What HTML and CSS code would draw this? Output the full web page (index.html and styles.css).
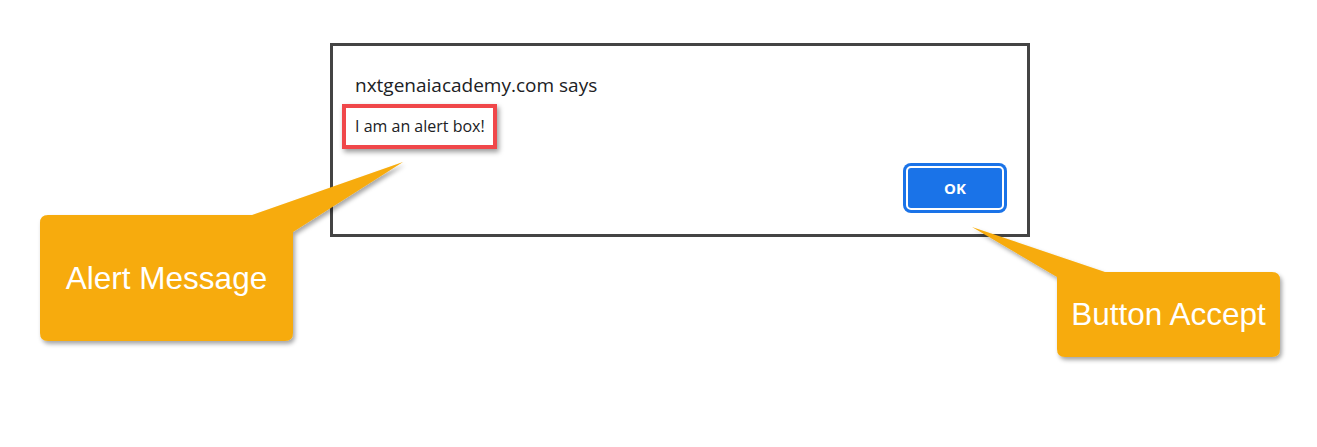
FILE: index.html
```html
<!DOCTYPE html>
<html>
<head>
<meta charset="utf-8">
<link rel="stylesheet" href="styles.css">
</head>
<body>
<div class="stage">
  <div class="dialog">
    <div class="title">nxtgenaiacademy.com says</div>
    <div class="message">I am an alert box!</div>
    <div class="actions"><button class="ok">OK</button></div>
  </div>

  <svg class="shapes" width="1317" height="447" viewBox="0 0 1317 447">
    <defs>
      <filter id="sh" x="-10%" y="-10%" width="130%" height="140%">
        <feDropShadow dx="2" dy="3" stdDeviation="2.2" flood-color="#000" flood-opacity="0.35"/>
      </filter>
    </defs>
    <path filter="url(#sh)" fill="#f7ab0a" d="M48,215 L252,215 L403,162 L293,232 L293,333 Q293,341 285,341 L48,341 Q40,341 40,333 L40,223 Q40,215 48,215 Z"/>
    <path filter="url(#sh)" fill="#f7ab0a" d="M972,227 L1105,272 L1272,272 Q1280,272 1280,280 L1280,349 Q1280,357 1272,357 L1065,357 Q1057,357 1057,349 L1057,277 Z"/>
  </svg>
  <div class="label label-alert">Alert Message</div>
  <div class="label label-accept">Button Accept</div>
</div>
</body>
</html>
```

FILE: styles.css
```css
html, body {
  margin: 0;
  padding: 0;
  background: #ffffff;
}

.stage {
  position: relative;
  width: 1317px;
  height: 447px;
  overflow: hidden;
  padding-top: 43px;
  box-sizing: border-box;
}

.dialog {
  margin-left: 330px;
  width: 700px;
  height: 194px;
  box-sizing: border-box;
  border: 3px solid #444444;
  background: #ffffff;
  padding-top: 27px;
  font-family: "Open Sans", "Noto Sans", sans-serif;
  color: #202124;
}

.title {
  padding-left: 22px;
  font-size: 19px;
  line-height: 24px;
}

.message {
  display: inline-block;
  margin-top: 7px;
  margin-left: 9px;
  border: 4px solid #f0474a;
  padding: 8px 9px 9px 9px;
  font-size: 16px;
  line-height: 20px;
  width: 155px;
  box-sizing: border-box;
  white-space: nowrap;
  box-shadow: 2px 3px 5px rgba(0, 0, 0, 0.4);
}

.actions {
  display: flex;
  justify-content: flex-end;
  margin-top: 17px;
  margin-right: 23px;
}

.ok {
  width: 98px;
  height: 44px;
  box-sizing: border-box;
  background: #1a73e8;
  border: 2px solid #ffffff;
  border-radius: 5px;
  box-shadow: 0 0 0 3px #1a73e8;
  color: #ffffff;
  font-family: "Open Sans", "Noto Sans", sans-serif;
  font-weight: 700;
  font-size: 15px;
  padding: 0;
}

.shapes {
  position: absolute;
  left: 0;
  top: 0;
  pointer-events: none;
}

.label {
  position: absolute;
  display: flex;
  align-items: center;
  justify-content: center;
  color: #ffffff;
  font-family: "Liberation Sans", Arial, sans-serif;
  font-size: 31.5px;
}

.label-alert {
  left: 40px;
  top: 215px;
  width: 253px;
  height: 126px;
}

.label-accept {
  left: 1057px;
  top: 272px;
  width: 223px;
  height: 85px;
}
```
